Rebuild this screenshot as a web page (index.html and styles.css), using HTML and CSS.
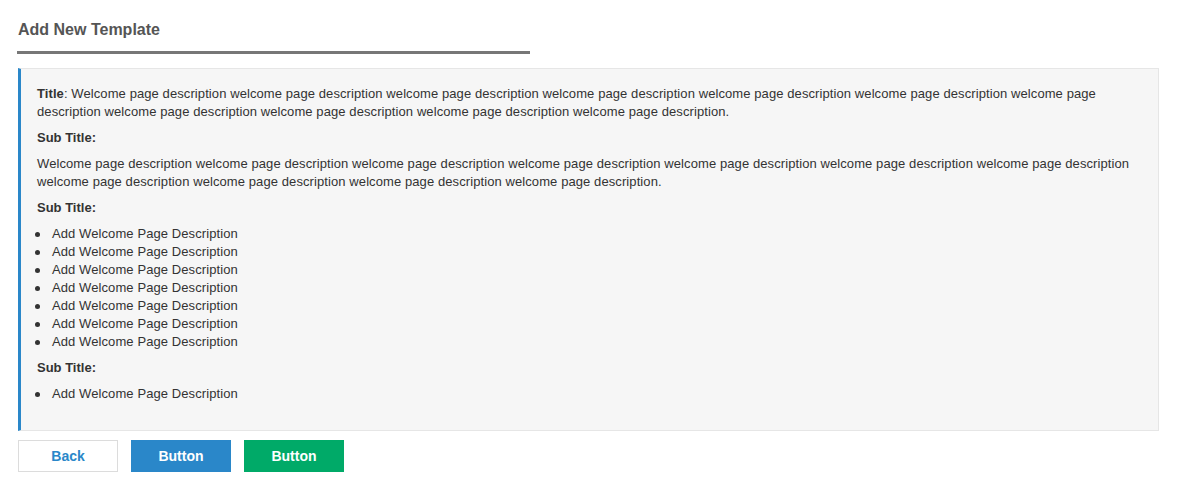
FILE: index.html
```html
<!DOCTYPE html>
<html>
<head>
<meta charset="utf-8">
<link rel="stylesheet" href="styles.css">
</head>
<body>
<div class="page">
  <div class="header">
    <h1 class="heading">Add New Template</h1>
    <div class="heading-bar"></div>
  </div>
  <div class="panel">
    <p class="block"><b>Title</b>: Welcome page description welcome page description welcome page description welcome page description welcome page description welcome page description welcome page description welcome page description welcome page description welcome page description welcome page description.</p>
    <p class="block sub">Sub Title:</p>
    <p class="block">Welcome page description welcome page description welcome page description welcome page description welcome page description welcome page description welcome page description welcome page description welcome page description welcome page description welcome page description.</p>
    <p class="block sub">Sub Title:</p>
    <ul class="block list">
      <li>Add Welcome Page Description</li>
      <li>Add Welcome Page Description</li>
      <li>Add Welcome Page Description</li>
      <li>Add Welcome Page Description</li>
      <li>Add Welcome Page Description</li>
      <li>Add Welcome Page Description</li>
      <li>Add Welcome Page Description</li>
    </ul>
    <p class="block sub">Sub Title:</p>
    <ul class="block list">
      <li>Add Welcome Page Description</li>
    </ul>
  </div>
  <div class="actions">
    <button class="btn btn-back">Back</button>
    <button class="btn btn-blue">Button</button>
    <button class="btn btn-green">Button</button>
  </div>
</div>
</body>
</html>
```
FILE: styles.css
```css
html, body {
  margin: 0;
  padding: 0;
  background: #fff;
}
body {
  font-family: "Liberation Sans", Arial, sans-serif;
  color: #333;
}
.page {
  padding: 0 18px 0 18px;
}
.header {
  padding-top: 20px;
}
.heading {
  margin: 0;
  font-size: 16px;
  line-height: 19px;
  font-weight: bold;
  color: #555;
}
.heading-bar {
  margin-top: 12px;
  margin-left: -1px;
  width: 45%;
  height: 3px;
  background: #777;
}
.panel {
  margin-top: 14px;
  background: #f6f6f6;
  border: 1px solid #e6e6e6;
  border-left: 3px solid #2a87c9;
  padding: 16px 20px 19px 16px;
  font-size: 13px;
  line-height: 18px;
  letter-spacing: 0.09px;
}
.block {
  margin: 0 0 8px 0;
}
.sub {
  font-weight: bold;
  letter-spacing: 0;
}
.list {
  padding-left: 15px;
  list-style: none;
}
.list li {
  position: relative;
}
.list li::before {
  content: "";
  position: absolute;
  left: -17px;
  top: 7px;
  width: 5px;
  height: 5px;
  border-radius: 50%;
  background: #333;
}
.actions {
  display: flex;
  gap: 13px;
  margin-top: 9px;
}
.btn {
  width: 100px;
  height: 32px;
  font-family: "Liberation Sans", Arial, sans-serif;
  font-size: 14px;
  font-weight: bold;
  border: 1px solid transparent;
  padding: 0 0 1px 0;
  cursor: pointer;
}
.btn-back {
  background: #fff;
  border-color: #dcdcdc;
  color: #2a87c9;
}
.btn-blue {
  background: #2a87c9;
  border-color: #2a87c9;
  color: #fff;
}
.btn-green {
  background: #00aa68;
  border-color: #00aa68;
  color: #fff;
}
```
